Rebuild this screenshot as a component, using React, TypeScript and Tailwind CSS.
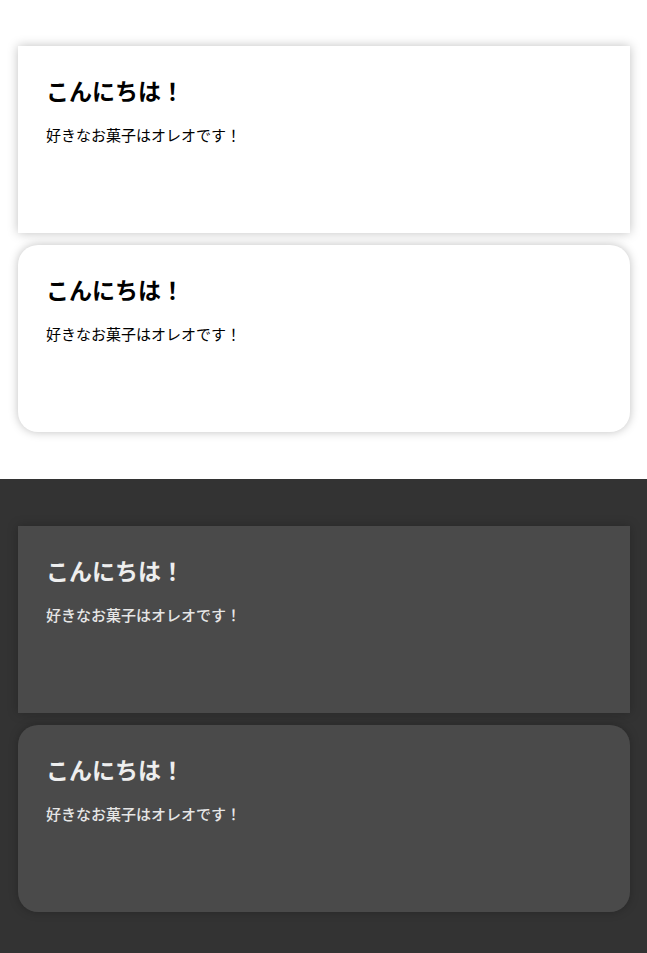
function Card({ dark = false, rounded = false }: { dark?: boolean; rounded?: boolean }) {
  const tone = dark
    ? "bg-[#4a4a4a] font-medium text-[#eeeeee]"
    : "bg-white text-black";
  return (
    <article
      className={`min-h-[187px] px-7 pt-[26px] shadow-[0_0_10px_rgba(0,0,0,0.25)] ${tone} ${rounded ? "rounded-[20px]" : ""}`}
    >
      <h2 className="text-[23px] leading-9 font-bold">こんにちは！</h2>
      <p className={`mt-4 text-[15px] leading-[22px] ${dark ? "text-[#e6e6e6]" : ""}`}>好きなお菓子はオレオです！</p>
    </article>
  );
}

export default function App() {
  return (
    <main className="font-['Noto_Sans_CJK_JP',sans-serif]">
      <section className="flex flex-col gap-3 bg-white pt-[46px] pr-[17px] pb-[47px] pl-[18px]">
        <Card />
        <Card rounded />
      </section>
      <section className="flex flex-col gap-3 bg-[#333333] pt-[47px] pr-[17px] pb-[41px] pl-[18px]">
        <Card dark />
        <Card dark rounded />
      </section>
    </main>
  );
}
